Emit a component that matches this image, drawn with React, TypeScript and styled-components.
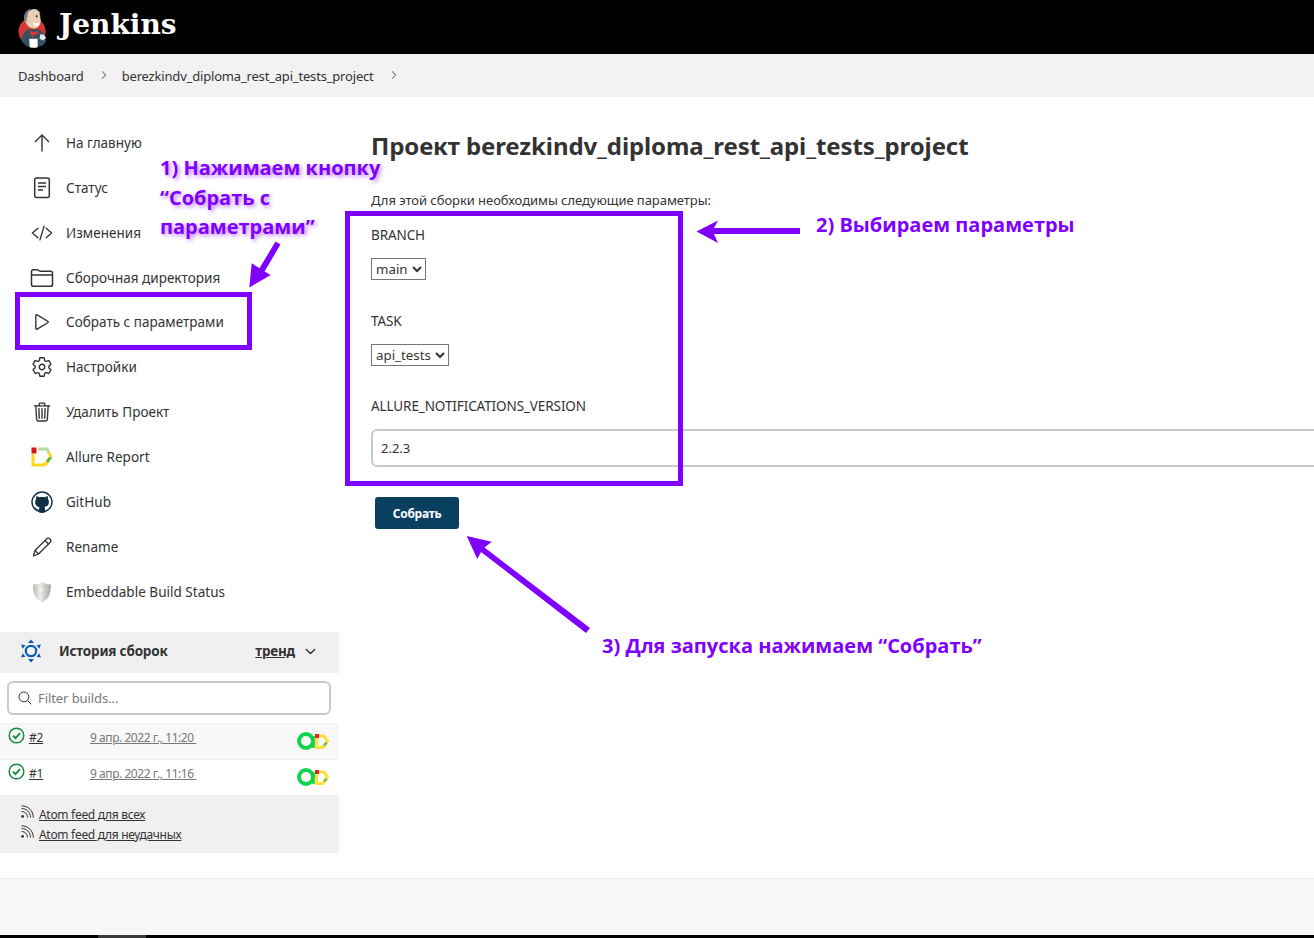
import React from "react";
import styled, { createGlobalStyle } from "styled-components";
import {
  IoCodeSlashOutline,
  IoFolderOutline,
  IoPlayOutline,
  IoSettingsOutline,
  IoTrashOutline,
  IoSearchOutline,
  IoChevronDownOutline,
  IoChevronForwardOutline,
} from "react-icons/io5";

const Global = createGlobalStyle`
  html, body { margin: 0; padding: 0; background: #fff; }
  body { font-family: "Noto Sans", "Open Sans", sans-serif; color: #333; }
  * { box-sizing: border-box; }
`;

const PURPLE = "#7f00ff";

const Page = styled.div`
  position: relative;
  width: 1314px;
  height: 938px;
  overflow: hidden;
  display: flex;
  flex-direction: column;
  background: #fff;
`;

const Header = styled.header`
  height: 54px;
  background: #000;
  display: flex;
  align-items: center;
  padding-left: 17px;
  gap: 11px;
  flex: none;
`;

const Brand = styled.span`
  font-family: "DejaVu Serif", "Liberation Serif", serif;
  font-weight: 700;
  font-size: 28px;
  color: #fff;
  margin-top: -6px;
`;

const Crumbs = styled.nav`
  height: 43px;
  background: #f2f2f2;
  display: flex;
  align-items: center;
  padding-left: 18px;
  font-size: 13px;
  color: #333;
  flex: none;
  letter-spacing: -0.18px;
`;

const CrumbArrow = styled.span<{ $gap: number }>`
  display: inline-flex;
  color: #8a8a8a;
  margin: 0 ${(p) => p.$gap}px 2px 14px;
  font-size: 12px;
`;

const Main = styled.main`
  flex: 1;
  display: flex;
  min-height: 0;
`;

const Side = styled.aside`
  width: 339px;
  flex: none;
  padding-top: 23.4px;
`;

const NavItem = styled.div`
  height: 44.9px;
  display: flex;
  align-items: center;
  padding-left: 28px;
  gap: 10px;
  font-size: 13.5px;
  color: #333;
  letter-spacing: 0.02px;
`;

const NavIcon = styled.span`
  width: 28px;
  height: 24px;
  display: flex;
  align-items: center;
  justify-content: center;
  font-size: 22px;
  color: #333;
  flex: none;
`;

const HistoryHead = styled.div`
  margin-top: 17.7px;
  height: 41px;
  background: #f0f0f0;
  display: flex;
  align-items: center;
  padding: 0 21px 2px 20px;
  font-size: 13.5px;
  font-weight: 700;
  color: #333;
  letter-spacing: -0.2px;
`;

const HistoryTitle = styled.span`
  margin-left: 17px;
  flex: 1;
`;

const Trend = styled.span`
  text-decoration: underline;
  margin-right: 8px;
`;

const FilterBox = styled.div`
  margin: 8px 8px 8px 7px;
  height: 34px;
  border: 2px solid #c3ccd1;
  border-radius: 6px;
  display: flex;
  align-items: center;
  padding-left: 8px;
  gap: 5px;
  font-size: 13px;
  color: #7a7a7a;
  background: #fff;
  letter-spacing: -0.08px;
`;

const BuildRow = styled.div<{ $alt?: boolean }>`
  height: 36px;
  background: ${(p) => (p.$alt ? "#f8f8f8" : "#fff")};
  border-top: 1px solid #f0f0f0;
  display: flex;
  padding: 3px 10px 0 8px;
  font-size: 12px;
  color: #333;
  letter-spacing: -0.2px;
`;

const BuildStatus = styled.span`
  display: flex;
  height: 19px;
  width: 21px;
  flex: none;
`;

const BuildNum = styled.a`
  width: 61px;
  flex: none;
  text-decoration: underline;
  margin-top: 2px;
  line-height: 17px;
`;

const BuildDate = styled.a`
  flex: 1;
  color: #777;
  text-decoration: underline;
  white-space: pre;
  margin-top: 2px;
  line-height: 17px;
  letter-spacing: -0.45px;
`;

const BuildBadge = styled.span`
  margin-top: 5px;
  display: flex;
  filter: blur(0.5px);
`;

const Feeds = styled.div`
  height: 58px;
  background: #f0f0f0;
  padding: 9px 0 0 20px;
  font-size: 12px;
  color: #333;
  letter-spacing: -0.3px;
`;

const FeedRow = styled.div`
  display: flex;
  align-items: center;
  gap: 5px;
  height: 20px;
  a {
    text-decoration: underline;
    margin-top: 1px;
  }
  svg {
    margin-top: -3px;
  }
`;

const Content = styled.section`
  flex: 1;
  min-width: 0;
  padding: 34px 0 0 32px;
  margin-right: -60px;
`;

const Title = styled.h1`
  margin: 0;
  font-size: 24px;
  line-height: 30px;
  font-weight: 700;
  color: #333;
  letter-spacing: -0.1px;
  white-space: nowrap;
`;

const Lead = styled.p`
  margin: 31px 0 0;
  font-size: 13px;
  line-height: 16px;
  color: #333;
  letter-spacing: -0.05px;
`;

const Field = styled.div<{ $top: number }>`
  margin-top: ${(p) => p.$top}px;
`;

const FieldLabel = styled.label`
  display: block;
  font-size: 13.5px;
  line-height: 18px;
  color: #333;
  margin-bottom: 14px;
  letter-spacing: -0.1px;
`;

const Choice = styled.select`
  display: block;
  height: 22px;
  font-family: "Noto Sans", sans-serif;
  font-size: 13.3px;
  color: #333;
  background: #fff;
  border: 1px solid #767676;
  border-radius: 0;
  padding: 0 1px 0 0;
`;

const TextBox = styled.input`
  display: block;
  width: 100%;
  height: 38px;
  border: 2px solid #c3ccd1;
  border-radius: 6px;
  padding: 0 8px;
  font-family: "Noto Sans", sans-serif;
  font-size: 13px;
  color: #333;
`;

const SubmitButton = styled.button`
  display: block;
  margin: 30px 0 0 4px;
  width: 84px;
  height: 32px;
  background: #0b3f60;
  color: #fff;
  border: none;
  border-radius: 3px;
  font-family: "Noto Sans", sans-serif;
  font-size: 12px;
  font-weight: 700;
  letter-spacing: -0.3px;
  padding: 0;
`;

const PageFoot = styled.footer`
  height: 57px;
  flex: none;
  background: #f7f7f7;
  border-top: 1px solid #eee;
`;

const Strip = styled.div`
  height: 3px;
  flex: none;
  background: #000;
  padding-left: 98px;
`;

const StripThumb = styled.div`
  width: 48px;
  height: 3px;
  background: #3a3a3a;
`;

const Frame = styled.div<{ $x: number; $y: number; $w: number; $h: number }>`
  position: absolute;
  left: ${(p) => p.$x}px;
  top: ${(p) => p.$y}px;
  width: ${(p) => p.$w}px;
  height: ${(p) => p.$h}px;
  border: 5px solid ${PURPLE};
  pointer-events: none;
`;

const Note = styled.div<{ $x: number; $y: number; $glow?: boolean }>`
  position: absolute;
  left: ${(p) => p.$x}px;
  top: ${(p) => p.$y}px;
  font-family: "Open Sans", "Noto Sans", sans-serif;
  font-size: 20px;
  font-weight: 700;
  line-height: 29.5px;
  color: ${PURPLE};
  white-space: pre;
  text-shadow: ${(p) => (p.$glow ? "2px 2px 4px rgba(127,0,255,.5)" : "none")};
`;

const ArrowLayer = styled.svg`
  position: absolute;
  left: 0;
  top: 0;
  pointer-events: none;
`;

const JenkinsLogo = () => (
  <svg width="31" height="43" viewBox="0 0 33 46">
    <circle cx="16" cy="27" r="14.500" fill="#d33833" />
    <path d="M5 38c0-7 3-11 7-13l10 0c4 1 8 5 9 13l-3 4-8 2-10-1z" fill="#335061" />
    <path d="M8 15c-1-6 3-11 9-11 5 0 8 4 8 9 0 2 1 3 0 5-1 4-4 7-8 6-4 0-7-4-9-9z" fill="#e8cdb0" />
    <path d="M8 15c-2-6 2-11 7-12-3 2-4 6-4 9-1 1-1 3 0 5z" fill="#6b7d88" />
    <path d="M15 4c4-2 9 0 10 5-3-3-6-4-10-5z" fill="#cfcfcf" />
    <circle cx="21" cy="11" r="1" fill="#222" />
    <path d="M17 17c2 2 5 2 7 0l-1 4h-5z" fill="#fff" />
    <path d="M13 26l5 2 4-2 1 4-5 1-1 3-2-3z" fill="#d33833" />
    <path d="M25 30l4 1 2 3-3 3-4-2z" fill="#e8e8e8" />
    <path d="M13 35h9v9c-3 1-6 1-8.500 0z" fill="#fff" />
  </svg>
);

const UpIcon = () => (
  <svg width="22" height="22" viewBox="0 0 22 22" fill="none" stroke="#333" strokeWidth="1.400">
    <path d="M11 19.500V3M4 10l7-7 7 7" />
  </svg>
);

const PencilIcon = () => (
  <svg width="22" height="22" viewBox="0 0 22 22" fill="none" stroke="#333" strokeWidth="1.300" strokeLinejoin="round">
    <path d="M2.500 20l1.500-5.500L15.500 3c1-1 2.500-1 3.500 0s1 2.500 0 3.500L7.500 18z" />
    <path d="M14 4.500l3.500 3.500M4 14.500l3.500 3.500" />
  </svg>
);

const DocIcon = () => (
  <svg width="18" height="22" viewBox="0 0 18 22" fill="none" stroke="#333">
    <rect x="1.700" y="1" width="14.600" height="19.500" rx="2" strokeWidth="1.500" />
    <path d="M5 6h8M5 9.500h8M5 13h5" strokeWidth="1.400" />
  </svg>
);

const AllureIcon = () => (
  <svg width="22" height="20" viewBox="0 0 22 20" fill="none">
    <path d="M2 7v11h10l3-2" stroke="#ffd91a" strokeWidth="3" />
    <path d="M13 18l2-1 2-3" stroke="#ffd91a" strokeWidth="3" />
    <path d="M16 15l4-5.500" stroke="#6ab540" strokeWidth="3" />
    <path d="M20 10l-3-6" stroke="#ffd91a" strokeWidth="3" />
    <path d="M18 5.500L16 2H7" stroke="#b6dda2" strokeWidth="3" />
    <rect x="0.500" y="0.500" width="5" height="6" fill="#e0141c" />
  </svg>
);

const GithubIcon = () => (
  <svg width="22" height="22" viewBox="0 0 22 22">
    <circle cx="11" cy="11" r="10" fill="#fff" stroke="#0f2f45" strokeWidth="1.400" />
    <path
      d="M5.500 5l2.800 1.300c1.700-.5 3.700-.5 5.400 0L16.500 5c.5 1.300.6 2.300.4 3.100.7.800 1 1.700 1 2.800 0 3-1.700 4.500-4.600 4.900.6.500.8 1.200.8 2.200v3.300c-1.700.5-4.500.5-6.200 0v-2c-2 .4-3-.4-3.500-1.800l-1-1c1 0 1.600.5 2 1.100.7 1 1.500 1.200 2.500.7 0-.7.300-1.300.7-1.900C5.700 15.400 4.100 14 4.100 11c0-1.100.3-2 1-2.800-.2-.9-.1-2 .4-3.200z"
      fill="#0f2f45"
    />
  </svg>
);

const ShieldIcon = () => (
  <svg width="20" height="22" viewBox="0 0 20 22">
    <defs>
      <linearGradient id="shieldFill" x1="0" x2="1" y1="0" y2="0">
        <stop offset="0" stopColor="#b8b8b4" />
        <stop offset="0.4" stopColor="#eeeeec" />
        <stop offset="0.6" stopColor="#d2d2cf" />
        <stop offset="1" stopColor="#a8a8a4" />
      </linearGradient>
    </defs>
    <path d="M10 1c3 1.800 5.500 2.500 9 2.500 0 8-1.500 14.500-9 18C2.500 18 1 11.500 1 3.500 4.500 3.500 7 2.800 10 1z" fill="url(#shieldFill)" />
    <circle cx="10" cy="9" r="1" fill="#fff" />
  </svg>
);

const HistoryIcon = () => (
  <svg width="22" height="24" viewBox="0 0 22 24" fill="#0b5bb5">
    <circle cx="11" cy="12" r="5.200" fill="none" stroke="#0b5bb5" strokeWidth="2.200" />
    <path d="M11 0.500l3 3.500H8zM11 23.500l3-3.500H8zM1 5.500l4.500 .8-2.800 3.500zM21 5.500l-4.500 .8 2.800 3.500zM1 18.500l4.500-.8-2.800-3.500zM21 18.500l-4.500-.8 2.800-3.500z" />
  </svg>
);

const StatusOk = () => (
  <svg width="17" height="17" viewBox="0 0 17 17" fill="none" stroke="#138a3e">
    <circle cx="8.500" cy="8.500" r="7.300" strokeWidth="1.500" />
    <path d="M5 8.700l2.500 2.500 4.500-5" strokeWidth="1.900" />
  </svg>
);

const RssIcon = () => (
  <svg width="14" height="14" viewBox="0 0 14 14" fill="none" stroke="#333" strokeWidth="1">
    <circle cx="2.600" cy="11.400" r="1.400" fill="#333" stroke="none" />
    <path d="M1.500 6.500c3.500 0 6 2.500 6 6M1.500 3.500c5.200 0 9 3.800 9 9M1.500 .8c6.800 0 11.800 5 11.800 11.800" />
  </svg>
);

const BuildAllure = () => (
  <svg width="32" height="18" viewBox="0 0 32 18" fill="none">
    <circle cx="9" cy="9" r="7" stroke="#0fd24f" strokeWidth="3.800" />
    <path d="M16.500 4v12" stroke="#0fd24f" strokeWidth="2.500" />
    <path d="M19.500 4v11.500h6.500l4.500-6.500-3.500-5H21" stroke="#ffdf3a" strokeWidth="3" />
    <rect x="18" y="2" width="4" height="4" fill="#e6222a" />
    <path d="M27 13.500l2.500-3" stroke="#7fb94c" strokeWidth="2.600" />
  </svg>
);

const navItems: { label: string; icon: React.ReactNode }[] = [
  { label: "На главную", icon: <UpIcon /> },
  { label: "Статус", icon: <DocIcon /> },
  { label: "Изменения", icon: <IoCodeSlashOutline /> },
  { label: "Сборочная директория", icon: <IoFolderOutline size={24} /> },
  { label: "Собрать с параметрами", icon: <IoPlayOutline /> },
  { label: "Настройки", icon: <IoSettingsOutline /> },
  { label: "Удалить Проект", icon: <IoTrashOutline /> },
  { label: "Allure Report", icon: <AllureIcon /> },
  { label: "GitHub", icon: <GithubIcon /> },
  { label: "Rename", icon: <PencilIcon /> },
  { label: "Embeddable Build Status", icon: <ShieldIcon /> },
];

export default function App() {
  return (
    <Page>
      <Global />
      <Header>
        <JenkinsLogo />
        <Brand>Jenkins</Brand>
      </Header>
      <Crumbs>
        <span>Dashboard</span>
        <CrumbArrow $gap={12}>
          <IoChevronForwardOutline />
        </CrumbArrow>
        <span>berezkindv_diploma_rest_api_tests_project</span>
        <CrumbArrow $gap={0}>
          <IoChevronForwardOutline />
        </CrumbArrow>
      </Crumbs>
      <Main>
        <Side>
          {navItems.map((item) => (
            <NavItem key={item.label}>
              <NavIcon>{item.icon}</NavIcon>
              <span>{item.label}</span>
            </NavItem>
          ))}
          <HistoryHead>
            <HistoryIcon />
            <HistoryTitle>История сборок</HistoryTitle>
            <Trend>тренд</Trend>
            <IoChevronDownOutline size={15} />
          </HistoryHead>
          <FilterBox>
            <IoSearchOutline size={16} color="#333" />
            <span>Filter builds...</span>
          </FilterBox>
          <BuildRow $alt>
            <BuildStatus>
              <StatusOk />
            </BuildStatus>
            <BuildNum>#2</BuildNum>
            <BuildDate>{"9 апр. 2022 г., 11:20 "}</BuildDate>
            <BuildBadge>
              <BuildAllure />
            </BuildBadge>
          </BuildRow>
          <BuildRow>
            <BuildStatus>
              <StatusOk />
            </BuildStatus>
            <BuildNum>#1</BuildNum>
            <BuildDate>{"9 апр. 2022 г., 11:16 "}</BuildDate>
            <BuildBadge>
              <BuildAllure />
            </BuildBadge>
          </BuildRow>
          <Feeds>
            <FeedRow>
              <RssIcon />
              <a>Atom feed для всех</a>
            </FeedRow>
            <FeedRow>
              <RssIcon />
              <a>Atom feed для неудачных</a>
            </FeedRow>
          </Feeds>
        </Side>
        <Content>
          <Title>Проект berezkindv_diploma_rest_api_tests_project</Title>
          <Lead>Для этой сборки необходимы следующие параметры:</Lead>
          <Field $top={18}>
            <FieldLabel>BRANCH</FieldLabel>
            <Choice defaultValue="main">
              <option>main</option>
            </Choice>
          </Field>
          <Field $top={32}>
            <FieldLabel>TASK</FieldLabel>
            <Choice defaultValue="api_tests">
              <option>api_tests</option>
            </Choice>
          </Field>
          <Field $top={31}>
            <FieldLabel>ALLURE_NOTIFICATIONS_VERSION</FieldLabel>
            <TextBox defaultValue="2.2.3" />
          </Field>
          <SubmitButton>Собрать</SubmitButton>
        </Content>
      </Main>
      <PageFoot />
      <Strip>
        <StripThumb />
      </Strip>

      <Frame $x={15} $y={292} $w={237} $h={58} />
      <Frame $x={345} $y={211} $w={338} $h={275} />
      <Note $x={160} $y={153} $glow>
        {"1) Нажимаем кнопку\n“Собрать с\nпараметрами”"}
      </Note>
      <Note $x={816} $y={210}>2) Выбираем параметры</Note>
      <Note $x={602} $y={631}>3) Для запуска нажимаем “Собрать”</Note>
      <ArrowLayer width="1314" height="938" viewBox="0 0 1314 938" fill={PURPLE}>
        <path d="M249.300 287.500L251.700 263.300 259.500 268.300 275.500 241.500 280.500 244.500 264.500 271.500 270.700 275z" />
        <path d="M696.500 231.500L718 220.500 714 228H800V234H714L718 243z" />
        <path d="M466.700 536L491.700 541.700 484.500 547.500 590 628 586 633 481 552 477.300 559z" />
      </ArrowLayer>
    </Page>
  );
}
